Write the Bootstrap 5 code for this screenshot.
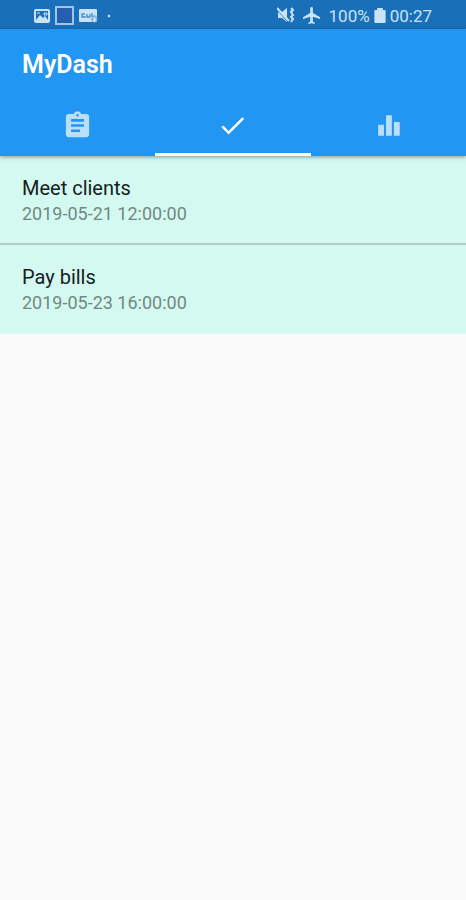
<!DOCTYPE html>
<html lang="en">
<head>
<meta charset="utf-8">
<meta name="viewport" content="width=device-width, initial-scale=1">
<title>MyDash</title>
<link href="https://cdn.jsdelivr.net/npm/bootstrap@5.3.0/dist/css/bootstrap.min.css" rel="stylesheet">
<style>
body { background: #fafafa; font-family: Roboto, sans-serif; }
.status-bar { height: 29px; background: #1a70b8; color: #c9e3f8; padding: 2px 34px 0; font-size: 17px; line-height: 28px; }
.app-bar { background: #2196f3; box-shadow: 0 1px 4px rgba(0,0,0,.4); }
.app-title { font-size: 25px; line-height: 32px; font-weight: 600; padding: 20px 22px 12px; }
.tab-btn { height: 63px; padding: 4px 0 0; color: #bbdefb; background: transparent; border: 0; border-bottom: 3px solid transparent; border-radius: 0; }
.tab-btn.active { color: #fff; border-bottom-color: #f4fffc; }
.task-item { background: #d4f9f0; padding: 20px 22px 17px; border-bottom: 2px solid #b2cbc5; }
.task-item:last-child { border-bottom-color: transparent; }
.task-name { font-size: 20px; line-height: 25px; font-weight: 400; color: #15211e; }
.task-time { font-size: 18px; line-height: 25px; color: #728882; }
</style>
</head>
<body>
<div class="status-bar d-flex justify-content-between">
  <div class="d-flex align-items-center gap-1">
    <svg width="16" height="14" viewBox="0 0 16 14" aria-hidden="true"><rect x="1" y="1" width="14" height="12" rx="1" fill="#1a70b8" stroke="currentColor" stroke-width="2"/><path d="M2 11 6 6l3 3 2-2 3 4v2H2z" fill="currentColor"/><path d="M3 4h3M10 4h3v2h-3z" stroke="currentColor" fill="none"/></svg>
    <svg width="21" height="19" viewBox="0 0 21 19" aria-hidden="true"><rect x="2" y="1" width="17" height="17" fill="#2560ae" stroke="#9cc4ec" stroke-width="2"/></svg>
    <svg width="20" height="16" viewBox="0 0 20 16" aria-hidden="true"><rect y="1" width="18" height="13" rx="1" fill="currentColor"/><path d="M6 6H3v3h3V8M8 6v3h3V6M13 5v4" fill="none" stroke="#4a8cc8" stroke-width="1.3"/><path d="M14 8h3v3h2l-3.500 4-3.500-4h2z" fill="currentColor" stroke="#4a8cc8" stroke-width=".8"/></svg>
    <svg class="ms-1" width="4" height="4" viewBox="0 0 4 4" aria-hidden="true"><circle cx="2" cy="2" r="1.3" fill="currentColor"/></svg>
  </div>
  <div class="d-flex align-items-center gap-1">
    <svg width="18" height="17" viewBox="0 0 18 17" aria-hidden="true"><path d="M1 5h4l5-4v14l-5-4H1z" fill="currentColor"/><path d="m0 3 11 12" stroke="#1a70b8" stroke-width="1"/><path d="m0 1 12 13" stroke="currentColor" stroke-width="2"/><path d="m14 1 2 2-2 2 2 3-2 2 2 2-2 3" fill="none" stroke="currentColor" stroke-width="2"/></svg>
    <svg class="ms-1 me-1" width="18" height="17" viewBox="2 2 20 20" preserveAspectRatio="none" aria-hidden="true"><path d="M21 16v-2l-8-5V3.500a1.500 1.500 0 0 0-3 0V9l-8 5v2l8-2.500V19l-2 1.500V22l3.500-1 3.500 1v-1.500L13 19v-5.500z" fill="currentColor"/></svg>
    <span>100%</span>
    <svg width="12" height="15" viewBox="0 0 12 16" aria-hidden="true"><path d="M3 0h6v2h2q1 0 1 1v12q0 1-1 1H1q-1 0-1-1V3q0-1 1-1h2z" fill="currentColor"/></svg>
    <span>00:27</span>
  </div>
</div>
<header class="app-bar position-relative">
  <h1 class="app-title text-white m-0">MyDash</h1>
  <nav class="row g-0" aria-label="Views">
    <button type="button" class="col btn tab-btn" aria-label="Tasks"><svg width="31" height="31" viewBox="0 0 24 24" aria-hidden="true"><path fill="currentColor" d="M19 3h-4.180C14.400 1.840 13.300 1 12 1s-2.400.84-2.820 2H5c-1.100 0-2 .9-2 2v14c0 1.100.9 2 2 2h14c1.100 0 2-.9 2-2V5c0-1.100-.9-2-2-2zm-7 0c.55 0 1 .45 1 1s-.45 1-1 1-1-.45-1-1 .45-1 1-1zm2 14H7v-2h7zm3-4H7v-2h10zm0-4H7V7h10z"/></svg></button>
    <button type="button" class="col btn tab-btn active" aria-label="Completed" aria-current="page"><svg width="31" height="31" viewBox="0 0 24 24" aria-hidden="true"><path fill="currentColor" d="M9 16.170 4.830 12l-1.420 1.410L9 19 21 7l-1.410-1.410z"/></svg></button>
    <button type="button" class="col btn tab-btn" aria-label="Statistics"><svg width="31" height="31" viewBox="0 0 24 24" aria-hidden="true"><path fill="currentColor" d="M4 11.500h4.500V20H4zm12.200-2.300h4.500V20h-4.500zM10.100 4h4.500v16h-4.500z"/></svg></button>
  </nav>
</header>
<main>
  <ul class="list-unstyled m-0">
    <li class="task-item"><h2 class="task-name m-0">Meet clients</h2><time class="task-time d-block" datetime="2019-05-21T12:00:00">2019-05-21 12:00:00</time></li>
    <li class="task-item"><h2 class="task-name m-0">Pay bills</h2><time class="task-time d-block" datetime="2019-05-23T16:00:00">2019-05-23 16:00:00</time></li>
  </ul>
</main>
<script src="https://cdn.jsdelivr.net/npm/bootstrap@5.3.0/dist/js/bootstrap.bundle.min.js"></script>
</body>
</html>
